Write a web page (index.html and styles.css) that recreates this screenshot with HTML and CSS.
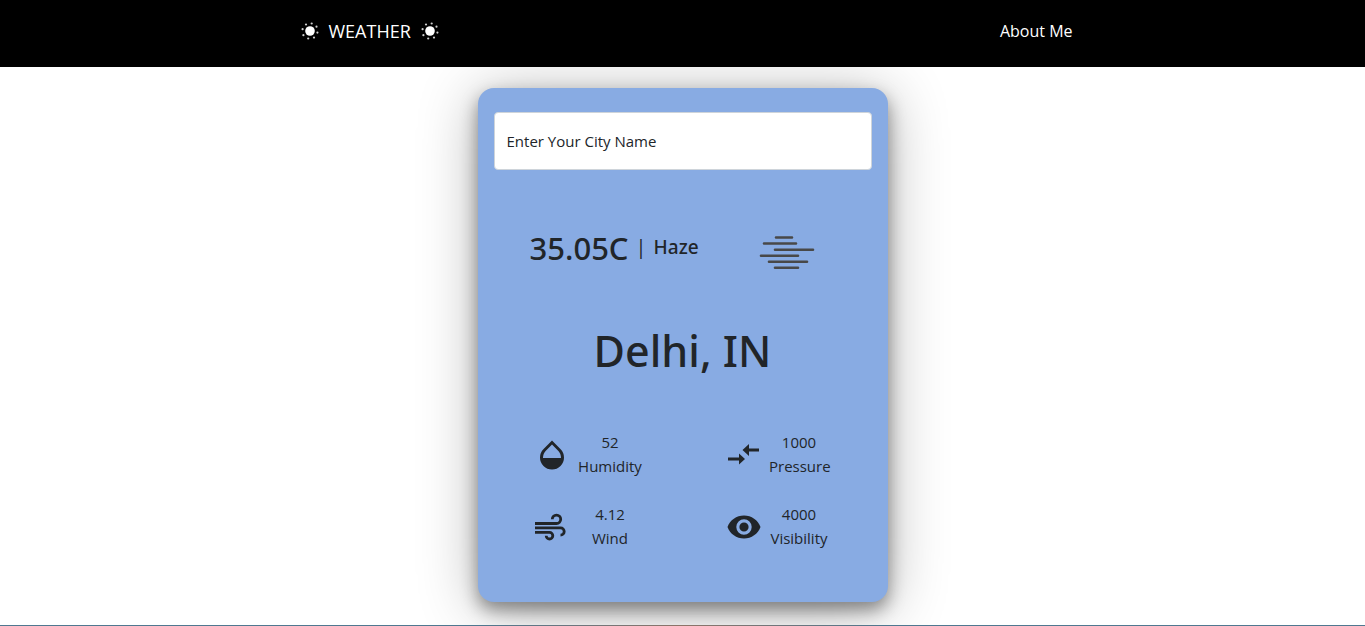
FILE: index.html
```html
<!DOCTYPE html>
<html lang="en">
<head>
<meta charset="utf-8">
<meta name="viewport" content="width=device-width, initial-scale=1">
<title>Weather</title>
<link rel="stylesheet" href="styles.css">
</head>
<body>
<header class="navbar">
  <nav class="navbar-inner">
    <a class="brand" href="#">
      <svg class="sun" viewBox="0 0 18 18" aria-hidden="true"><circle cx="9" cy="9" r="4.8"/><g class="rays"><circle cx="10.7" cy="1.5" r="1.1"/><circle cx="15.5" cy="4.7" r="1.1"/><circle cx="16.4" cy="10.6" r="1.1"/><circle cx="13" cy="15.6" r="1.1"/><circle cx="7.2" cy="16.5" r="1.1"/><circle cx="2.4" cy="13.2" r="1.1"/><circle cx="1.6" cy="7.2" r="1.1"/><circle cx="5" cy="2.5" r="1.1"/></g></svg>
      <span>WEATHER</span>
      <svg class="sun" viewBox="0 0 18 18" aria-hidden="true"><circle cx="9" cy="9" r="4.8"/><g class="rays"><circle cx="10.7" cy="1.5" r="1.1"/><circle cx="15.5" cy="4.7" r="1.1"/><circle cx="16.4" cy="10.6" r="1.1"/><circle cx="13" cy="15.6" r="1.1"/><circle cx="7.2" cy="16.5" r="1.1"/><circle cx="2.4" cy="13.2" r="1.1"/><circle cx="1.6" cy="7.2" r="1.1"/><circle cx="5" cy="2.5" r="1.1"/></g></svg>
    </a>
    <a class="nav-link" href="#">About Me</a>
  </nav>
</header>
<main class="content">
  <section class="card">
    <input class="city-input" type="text" placeholder="Enter Your City Name" aria-label="Enter Your City Name">
    <div class="current">
      <p class="reading"><span class="temp">35.05C</span><span class="bar">|</span><span class="condition">Haze</span></p>
      <svg class="haze" viewBox="0 0 56 36" aria-hidden="true"><path d="M17 2.5H33M5 8.5H37M16 14.7H54M2 20.7H39M10 26.8H48M16 32.8H39"/></svg>
    </div>
    <h1 class="city">Delhi, IN</h1>
    <div class="details">
      <div class="detail">
        <svg class="icon" viewBox="0 0 34 34" aria-hidden="true"><path d="M17 2.5 25.4 11A12 12 0 1 1 8.6 11ZM8 20H26C26 17 25 14.800 23.400 13L17 6.600 10.600 13C9 14.800 8 17 8 20Z" fill-rule="evenodd"/></svg>
        <p>52<br>Humidity</p>
      </div>
      <div class="detail detail-narrow">
        <svg class="icon" viewBox="0 0 34 34" aria-hidden="true"><path d="M12 19.500V15.500L18 21 12 26.500V22.500H1V19.500ZM22 6V10.500H32V13.500H22V18L15.500 12Z"/></svg>
        <p>1000<br>Pressure</p>
      </div>
      <div class="detail">
        <svg class="icon icon-wind" viewBox="0 0 34 34" aria-hidden="true"><path d="M0 13.500H21.500A4.200 4.200 0 1 0 17.300 9.300M0 17.800H25.500A3.700 3.700 0 0 1 25.500 25.200M0 22.400H14.500A3.300 3.300 0 1 1 11.200 25.700"/></svg>
        <p>4.12<br>Wind</p>
      </div>
      <div class="detail detail-narrow">
        <svg class="icon" viewBox="0 0 34 34" aria-hidden="true"><path d="M17 5.500C9.500 5.500 3 10.200 .5 17 3 23.800 9.500 28.500 17 28.500S31 23.800 33.500 17C31 10.200 24.500 5.500 17 5.500ZM17 24.700A7.700 7.700 0 1 1 17 9.300 7.700 7.700 0 0 1 17 24.700ZM17 12.400A4.600 4.600 0 1 0 17 21.600 4.600 4.600 0 0 0 17 12.400Z" fill-rule="evenodd"/></svg>
        <p>4000<br>Visibility</p>
      </div>
    </div>
  </section>
</main>
<footer class="strip"></footer>
</body>
</html>
```
FILE: styles.css
```css
* { box-sizing: border-box; }

body {
  display: flex;
  flex-direction: column;
  min-height: 100vh;
  margin: 0;
  background: #fff;
  color: #212529;
  font: 400 15px/24px "Open Sans", "Noto Sans", sans-serif;
}

p, h1 { margin: 0; }

.navbar {
  padding: 15px 24px 21px;
  background: #000;
}

.navbar-inner {
  display: flex;
  align-items: center;
  justify-content: space-between;
  max-width: 780px;
  min-height: 31px;
  margin: 0 auto;
}

.brand,
.nav-link {
  color: #fff;
  text-decoration: none;
}

.brand {
  display: flex;
  align-items: center;
  gap: 10px;
  padding-left: 8px;
  font-size: 18px;
}

.nav-link { font-size: 16px; }

.sun {
  width: 18px;
  height: 18px;
  fill: #fff;
}

.rays { fill: #ccc; }

.content {
  flex: 1;
  padding: 21px 16px 23px;
}

.card {
  max-width: 410px;
  margin: 0 auto;
  padding: 24px 16px 52px;
  border-radius: 16px;
  background: #88abe3;
  box-shadow: 0 8px 17px rgba(0, 0, 0, .4), 0 6px 60px rgba(0, 0, 0, .3);
}

.city-input {
  display: block;
  width: 100%;
  height: 58px;
  padding: 0 12px;
  border: 1px solid #ced4da;
  border-radius: 4px;
  background: #fff;
  color: #212529;
  font: inherit;
}

.city-input::placeholder {
  color: #212529;
  opacity: 1;
}

.current {
  display: flex;
  align-items: flex-end;
  justify-content: space-between;
  padding: 62px 57px 0 36px;
}

.reading {
  display: flex;
  align-items: flex-start;
  gap: 7px;
  height: 39px;
  line-height: 30px;
}

.temp {
  font: 500 31px/32px "Noto Sans", sans-serif;
}

.bar { font-size: 20px; }

.condition {
  font: 500 19px/30px "Noto Sans", sans-serif;
}

.haze {
  width: 56px;
  height: 36px;
  fill: none;
  stroke: #484848;
  stroke-width: 2.6;
  stroke-linecap: round;
}

.city {
  padding: 52px 0 51px;
  font: 500 43px/56px "Noto Sans", sans-serif;
  text-align: center;
}

.details {
  display: grid;
  grid-template-columns: 1fr 1fr;
  gap: 24px 0;
}

.detail {
  display: grid;
  grid-template-columns: 34px 66px;
  gap: 8px;
  align-items: center;
  justify-content: center;
  padding-left: 2px;
  text-align: center;
}

.detail-narrow { grid-template-columns: 34px 60px; }

.icon {
  width: 34px;
  height: 34px;
  margin-top: 2px;
  fill: #212529;
}

.icon-wind {
  fill: none;
  stroke: #212529;
  stroke-width: 2.8;
}

.strip {
  height: 1px;
  background: linear-gradient(90deg, #4f7890, #4f7890 35%, #8d7468 50%, #4f7890 65%);
}
```
